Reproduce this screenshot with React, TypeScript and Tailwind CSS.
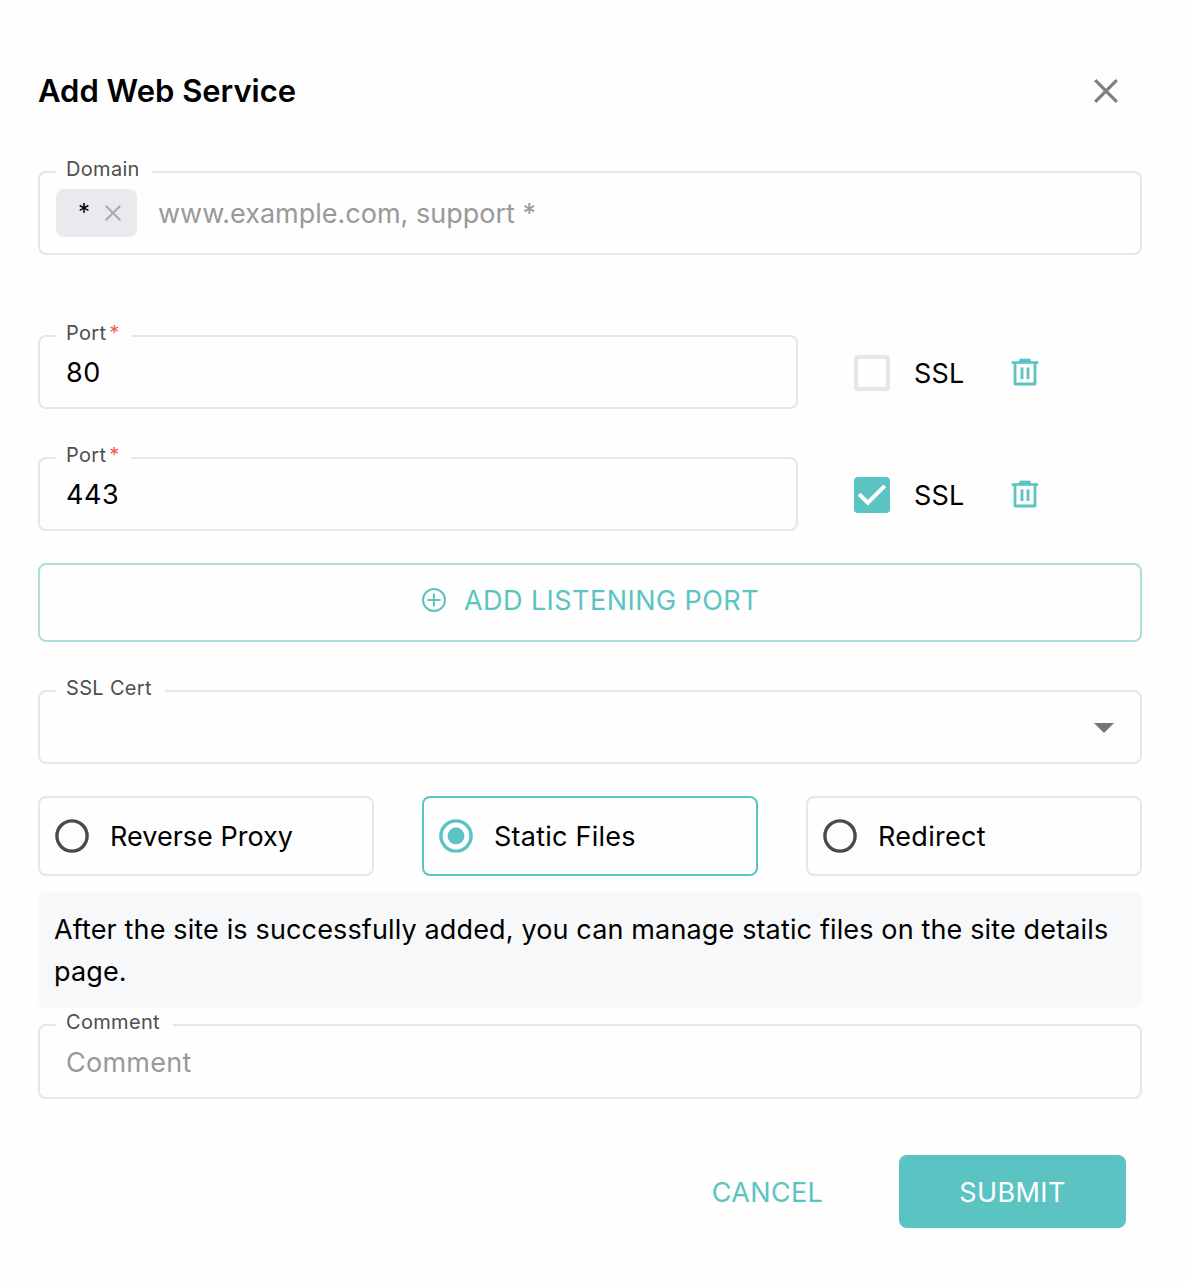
import type { ReactNode } from 'react';

function Field({
  label,
  notch,
  className,
  required,
  children,
}: {
  label: string;
  notch: string;
  className: string;
  required?: boolean;
  children?: ReactNode;
}) {
  return (
    <fieldset className={`flex min-w-0 rounded-lg border-2 border-[#e3e7ed] px-4 ${className}`}>
      <legend className={`h-0.5 px-2.5 ${notch}`}>
        <span className="-mt-[14px] block text-[20px] leading-6 tracking-[0.32px] whitespace-nowrap text-[#4f4f4f]">
          {label}
          {required && <span className="ml-[3px] text-[#f25c54]">*</span>}
        </span>
      </legend>
      {children}
    </fieldset>
  );
}

function TrashIcon() {
  return (
    <svg className="h-7 w-7" viewBox="0 0 28 28" fill="none" stroke="#5bc4c2">
      <path d="M0.7 4.5H27.3" strokeWidth="2.6" />
      <path d="M8 3.9L9 0.9H19L20 3.9Z" fill="#5bc4c2" strokeWidth="0.6" />
      <path d="M4 5V26H24V5" strokeWidth="2.8" strokeLinejoin="round" />
      <path d="M11 9.6V21M17 9.6V21" strokeWidth="2.8" />
    </svg>
  );
}

function PortRow({ port, ssl }: { port: string; ssl: boolean }) {
  return (
    <div className="flex items-center">
      <Field label="Port" notch="w-[75px]" className="h-[74px] w-[760px]" required>
        <span className="mt-4 ml-2.5 text-[27px] leading-10 tracking-[0.5px]">{port}</span>
      </Field>
      <span
        className={`mt-0.5 ml-14 flex h-9 w-9 items-center justify-center rounded ${
          ssl ? 'bg-[#5bc4c2]' : 'border-4 border-[#e3e7ed]'
        }`}
      >
        {ssl && (
          <svg className="h-9 w-9" viewBox="0 0 36 36" fill="none">
            <path d="M5.2 17.2L13.8 25.6L30.8 8.8" stroke="white" strokeWidth="4" />
          </svg>
        )}
      </span>
      <span className="mt-1 ml-6 w-[97px] text-[27px] leading-10 tracking-[0.2px]">SSL</span>
      <TrashIcon />
    </div>
  );
}

function Radio({ label, tracking, checked }: { label: string; tracking: string; checked?: boolean }) {
  return (
    <div
      className={`flex h-20 items-center rounded-lg border-2 pl-[15px] ${
        checked ? 'border-[#5bc4c2]' : 'border-[#e3e7ed]'
      }`}
    >
      <svg
        className={`h-[34px] w-[34px] ${checked ? 'text-[#5bc4c2]' : 'text-[#4a4a4a]'}`}
        viewBox="0 0 34 34"
        fill="none"
      >
        <circle cx="17" cy="17" r="15.1" stroke="currentColor" strokeWidth="3.4" />
        {checked && <circle cx="17" cy="17" r="8.4" fill="currentColor" />}
      </svg>
      <span className={`mt-0.5 ml-[21px] text-[27px] leading-10 ${tracking}`}>{label}</span>
    </div>
  );
}

export default function App() {
  return (
    <div className="flex h-[1282px] w-[1186px] flex-col bg-[#fefefe] pr-11 pl-[38px] font-['Inter',sans-serif] text-black">
      <header className="mt-[70px] flex h-[42px] items-center justify-between">
        <h1 className="text-[31px] font-semibold">Add Web Service</h1>
        <svg className="mr-6 h-6 w-6" viewBox="0 0 24 24" stroke="#7f7f7f" strokeWidth="3.2">
          <path d="M1.2 1.2L22.8 22.8M22.8 1.2L1.2 22.8" />
        </svg>
      </header>

      <Field label="Domain" notch="w-24" className="mt-[59px] h-[84px]">
        <span className="mt-4 flex h-12 w-[81px] items-center rounded-lg bg-[#e9eaee]">
          <span className="ml-[22px] w-[27px] text-[24px] leading-8">*</span>
          <svg className="-mt-px h-4 w-4" viewBox="0 0 16 16" stroke="#a9aaad" strokeWidth="2">
            <path d="M0.7 0.7L15.3 15.3M15.3 0.7L0.7 15.3" />
          </svg>
        </span>
        <span className="mt-[21px] ml-[21px] text-[27px] leading-10 text-[#999]">www.example.com, support *</span>
      </Field>

      <div className="mt-20 flex flex-col gap-12">
        <PortRow port="80" ssl={false} />
        <PortRow port="443" ssl />
      </div>

      <button className="mt-8 flex h-[79px] items-center justify-center rounded-lg border-2 border-[#a9e0dd] pb-0.5 text-[27px] tracking-[0.45px] text-[#5bc4c2]">
        <svg className="mr-[18px] mb-[3px] ml-px h-6 w-6" viewBox="0 0 24 24" fill="none" stroke="#5bc4c2" strokeWidth="2">
          <circle cx="12" cy="12" r="11" />
          <path d="M5.4 12H18.6M12 5.4V18.6" />
        </svg>
        ADD LISTENING PORT
      </button>

      <Field label="SSL Cert" notch="w-[109px]" className="mt-12 h-[74px]">
        <svg className="mt-[31px] mr-2.5 ml-auto h-2.5 w-5" viewBox="0 0 20 10">
          <path d="M0 0H20L10 10Z" fill="#757575" />
        </svg>
      </Field>

      <div className="mt-8 grid grid-cols-3 gap-12">
        <Radio label="Reverse Proxy" tracking="tracking-[0.02px]" />
        <Radio label="Static Files" tracking="tracking-[0.25px]" checked />
        <Radio label="Redirect" tracking="tracking-[0.3px]" />
      </div>

      <p className="mt-4 h-[116px] rounded-lg bg-[#f7f8fa] px-4 pt-[17px] text-[27px] leading-[42px] tracking-[0.14px] whitespace-nowrap">
        After the site is successfully added, you can manage static files on the site details
        <br />
        page.
      </p>

      <Field label="Comment" notch="w-[117px]" className="mt-4 h-[75px]">
        <span className="mt-[17px] ml-2.5 text-[27px] leading-10 tracking-[0.25px] text-[#999]">Comment</span>
      </Field>

      <footer className="mt-14 mr-4 flex justify-end text-[27px]">
        <button className="mr-[76px] pt-[3px] tracking-[0.3px] text-[#5bc4c2]">CANCEL</button>
        <button className="h-[73px] w-[227px] rounded-lg bg-[#5bc4c2] pt-[3px] tracking-[0.4px] text-white">SUBMIT</button>
      </footer>
    </div>
  );
}
